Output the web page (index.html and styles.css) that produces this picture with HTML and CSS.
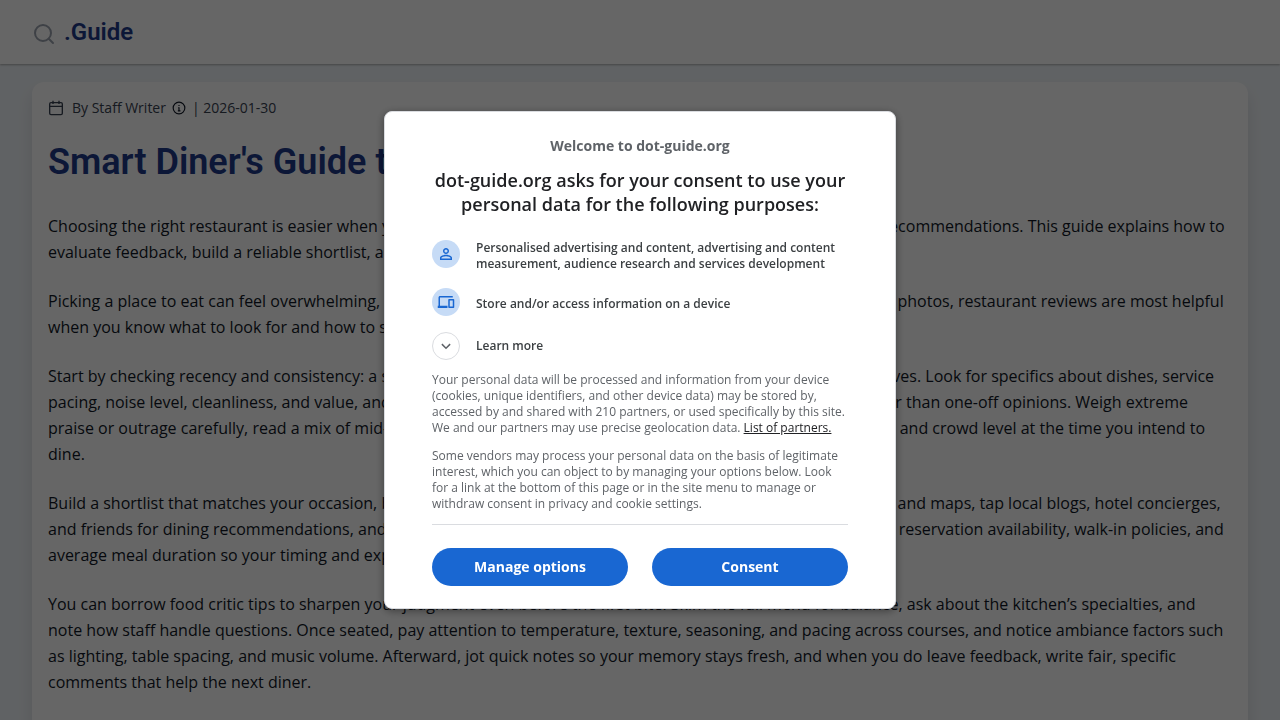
FILE: index.html
```html
<!DOCTYPE html>
<html lang="en">
<head>
    <meta charset="UTF-8">
    <meta name="viewport" content="width=device-width, initial-scale=1.0">
    <title>Smart Diner's Guide to Restaurant Reviews</title>
    <link rel="stylesheet" href="styles.css">
</head>
<body>
    <header class="topbar">
        <svg class="topbar-icon" viewBox="0 0 24 24" aria-hidden="true">
            <circle cx="11" cy="11" r="8"/>
            <path d="M21 21l-4.300-4.300"/>
        </svg>
        <a class="brand" href="#">.Guide</a>
    </header>

    <main>
        <article class="card">
            <div class="meta">
                <svg class="calendar" viewBox="0 0 24 24" aria-hidden="true">
                    <rect x="2.500" y="4" width="19" height="18" rx="2"/>
                    <path d="M7.500 1v5M16.500 1v5M2 9.500h20"/>
                </svg>
                <span>By Staff Writer</span>
                <svg class="info" viewBox="0 0 24 24" aria-hidden="true">
                    <circle cx="12" cy="12" r="10"/>
                    <path d="M10.500 11.500H12V17M10 17h4.500M12 7v1.500"/>
                </svg>
                <span>| 2026-01-30</span>
            </div>
            <h1>Smart Diner's Guide to Restaurant Reviews</h1>
            <p>Choosing the right restaurant is easier when you know how to use restaurant reviews and gather reliable dining recommendations. This guide explains how to evaluate feedback, build a reliable shortlist, and enjoy a better meal.</p>
            <p>Picking a place to eat can feel overwhelming, but a sensible approach helps. Between star ratings, comments, and photos, restaurant reviews are most helpful when you know what to look for and how to spot useful details.</p>
            <p>Start by checking recency and consistency: a steady stream of recent visits gives you much more than a few old raves. Look for specifics about dishes, service pacing, noise level, cleanliness, and value, and give more weight to patterns that repeat across most reviews rather than one-off opinions. Weigh extreme praise or outrage carefully, read a mix of mid-range ratings, and check recent photos for portion size, table layout, and crowd level at the time you intend to dine.</p>
            <p>Build a shortlist that matches your occasion, budget, and dietary limits. Beyond the typical restaurant review apps and maps, tap local blogs, hotel concierges, and friends for dining recommendations, and save the top options in one place. Check the menus, opening hours, reservation availability, walk-in policies, and average meal duration so your timing and expectations line up.</p>
            <p>You can borrow food critic tips to sharpen your judgment even before the first bite. Skim the full menu for balance, ask about the kitchen’s specialties, and note how staff handle questions. Once seated, pay attention to temperature, texture, seasoning, and pacing across courses, and notice ambiance factors such as lighting, table spacing, and music volume. Afterward, jot quick notes so your memory stays fresh, and when you do leave feedback, write fair, specific comments that help the next diner.</p>
        </article>
    </main>

    <div class="overlay">
        <div class="dialog" role="dialog" aria-modal="true" aria-labelledby="consent-title">
            <p class="welcome">Welcome to dot-guide.org</p>
            <h2 id="consent-title">dot-guide.org asks for your consent to use your personal data for the following purposes:</h2>

            <ul class="purposes">
                <li>
                    <span class="round">
                        <svg viewBox="0 0 24 24" aria-hidden="true"><path d="M12 5.900a2.100 2.100 0 1 1 0 4.200 2.100 2.100 0 0 1 0-4.200m0 9c2.970 0 6.100 1.460 6.100 2.100v1.100H5.900V17c0-.64 3.130-2.100 6.100-2.100M12 4C9.790 4 8 5.790 8 8s1.790 4 4 4 4-1.790 4-4-1.790-4-4-4zm0 9c-2.670 0-8 1.340-8 4v3h16v-3c0-2.660-5.330-4-8-4z"/></svg>
                    </span>
                    <span>Personalised advertising and content, advertising and content measurement, audience research and services development</span>
                </li>
                <li>
                    <span class="round">
                        <svg viewBox="0 0 24 24" aria-hidden="true"><path d="M4 6h17V4H4c-1.100 0-2 .9-2 2v11H1v3h13v-3H4V6zm18 2h-6c-.55 0-1 .45-1 1v10c0 .55.45 1 1 1h6c.55 0 1-.45 1-1V9c0-.55-.45-1-1-1zm-1 10h-4v-8h4v8z"/></svg>
                    </span>
                    <span>Store and/or access information on a device</span>
                </li>
            </ul>

            <button class="learn" type="button">
                <span class="round outline">
                    <svg viewBox="0 0 24 24" aria-hidden="true"><path d="M6.500 9.500l5.500 5.500 5.500-5.500"/></svg>
                </span>
                <span>Learn more</span>
            </button>

            <div class="details">
                <p>Your personal data will be processed and information from your device (cookies, unique identifiers, and other device data) may be stored by, accessed by and shared with 210 partners, or used specifically by this site. We and our partners may use precise geolocation data. <a href="#">List of partners.</a></p>
                <p>Some vendors may process your personal data on the basis of legitimate interest, which you can object to by managing your options below. Look for a link at the bottom of this page or in the site menu to manage or withdraw consent in privacy and cookie settings.</p>
            </div>

            <div class="actions">
                <button type="button">Manage options</button>
                <button type="button">Consent</button>
            </div>
        </div>
    </div>
</body>
</html>
```
FILE: styles.css
```css
*{
    margin: 0;
    padding: 0;
    box-sizing: border-box;
}
body{
    background-color: #f1f5f9;
    color: #111827;
    font: 16px/26px "Open Sans", sans-serif;
    overflow: hidden;
}
.topbar{
    display: flex;
    align-items: center;
    gap: 8px;
    height: 64px;
    padding: 0 32px;
    background-color: white;
    box-shadow: 0 1px 2px rgba(0, 0, 0, 0.3);
}
.topbar-icon{
    width: 24px;
    height: 24px;
    margin-top: 4px;
    fill: none;
    stroke: #9ca3af;
    stroke-width: 2;
    stroke-linecap: round;
}
.brand{
    color: #1e3a8a;
    font: 600 24px/32px Roboto, sans-serif;
    text-decoration: none;
}
main{
    padding: 18px 32px;
}
.card{
    padding: 16px 16px 32px;
    background-color: white;
    border-radius: 12px;
    box-shadow: 0 10px 15px rgba(0, 0, 0, 0.1);
}
.meta{
    display: flex;
    align-items: center;
    height: 20px;
    color: #374151;
    font-size: 14px;
    line-height: 20px;
}
.meta svg{
    width: 16px;
    height: 16px;
    fill: none;
    stroke: #374151;
    stroke-width: 2;
}
.meta .calendar{
    margin-right: 8px;
}
.meta .info{
    width: 14px;
    height: 14px;
    margin: 0 6px;
    stroke: #111827;
}
h1{
    margin: 20px 0 27px;
    color: #1e3a8a;
    font: 600 36px/48px Roboto, sans-serif;
}
.card p{
    margin-bottom: 23px;
}

/* consent dialog */
.overlay{
    position: fixed;
    inset: 0;
    display: flex;
    align-items: center;
    justify-content: center;
    background-color: rgba(0, 0, 0, 0.6);
}
.dialog{
    width: 512px;
    max-width: 100%;
    padding: 24px 47px 22px;
    border: 1px solid #dadce0;
    border-radius: 8px;
    background-color: white;
    box-shadow: 0 2px 8px rgba(0, 0, 0, 0.4);
    color: #3c4043;
    font-size: 12px;
    line-height: 16px;
}
.welcome{
    color: #5f6368;
    font-size: 14px;
    font-weight: bold;
    line-height: 20px;
    text-align: center;
}
.dialog h2{
    margin: 12px 0 24px;
    color: #202124;
    font-size: 18px;
    font-weight: 600;
    line-height: 24px;
    text-align: center;
}
.purposes{
    list-style: none;
    font-weight: 600;
}
.purposes li{
    display: flex;
    gap: 16px;
    min-height: 32px;
    margin-bottom: 16px;
}
.purposes li:last-child{
    align-items: center;
    margin-bottom: 12px;
}
.round{
    display: flex;
    align-items: center;
    justify-content: center;
    flex: none;
    align-self: flex-start;
    width: 28px;
    height: 28px;
    border-radius: 50%;
    background-color: #c6dbf6;
}
.round svg{
    width: 18px;
    height: 18px;
    fill: #1967d2;
}
.round.outline{
    border: 1px solid #dadce0;
    background-color: white;
}
.round.outline svg{
    fill: none;
    stroke: #5f6368;
    stroke-width: 2;
}
.learn{
    display: flex;
    align-items: center;
    gap: 16px;
    border: 0;
    background: none;
    color: inherit;
    font: inherit;
    font-weight: 600;
    cursor: pointer;
}
.details{
    padding-bottom: 12px;
    border-bottom: 1px solid #dadce0;
    color: #5f6368;
}
.details p{
    margin-top: 12px;
}
.details a{
    color: #202124;
    font-weight: 500;
}
.actions{
    display: flex;
    gap: 24px;
    margin-top: 23px;
}
.actions button{
    flex: 1;
    height: 38px;
    border: 0;
    border-radius: 19px;
    background-color: #1967d2;
    color: white;
    font: bold 14px/20px "Open Sans", sans-serif;
    cursor: pointer;
}
```
